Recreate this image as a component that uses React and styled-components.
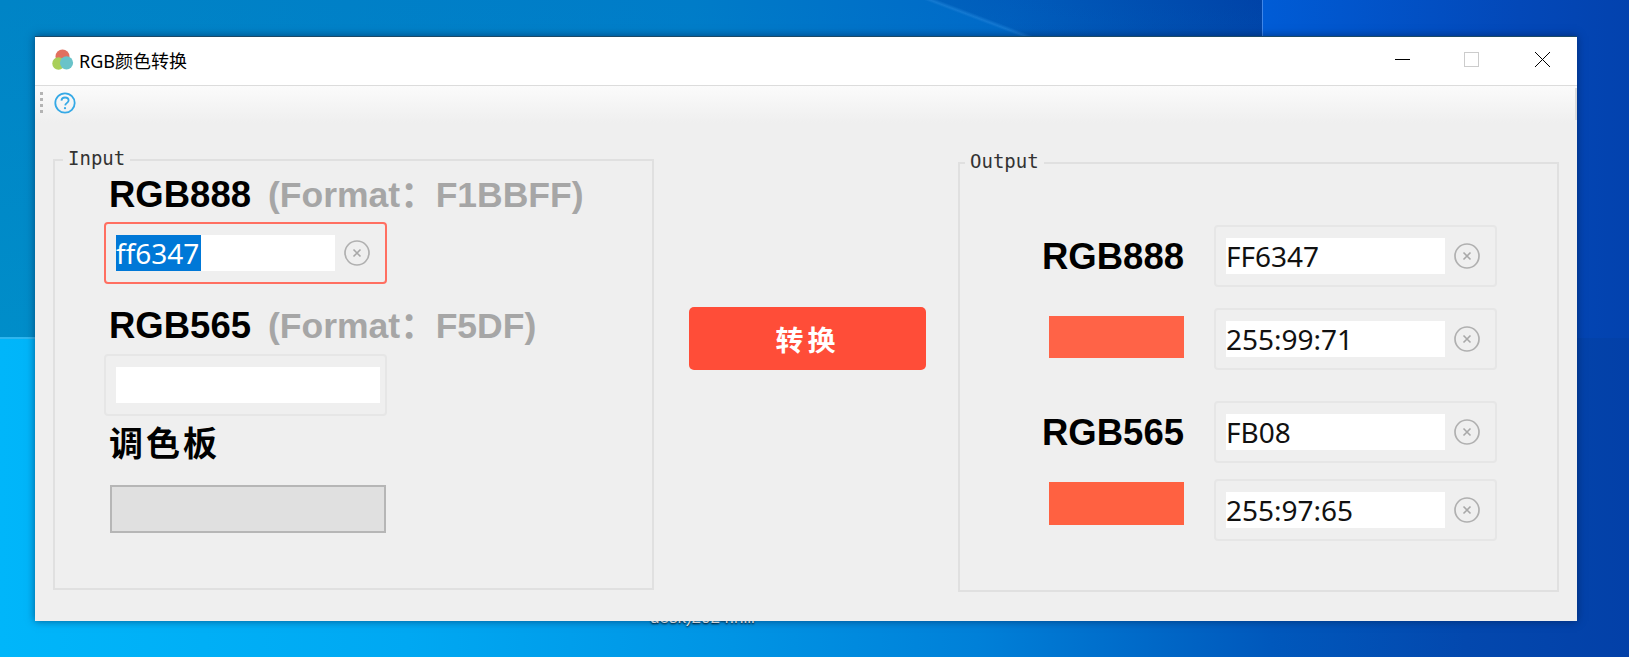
import React from "react";
import styled, { createGlobalStyle } from "styled-components";

const GlobalStyle = createGlobalStyle`
    html, body {
        margin: 0;
        padding: 0;
        overflow: hidden;
    }
`;

// wallpaper: three panes of the win10 light beam, most of it is behind the window
const Desktop = styled.div`
    position: relative;
    width: 1629px;
    height: 657px;
    box-sizing: border-box;
    padding: 36px 52px 36px 35px;
    overflow: hidden;
    background-color: #0345b0;
    background-repeat: no-repeat;
    background-image:
        linear-gradient(#2fb6ee, #2fb6ee),
        linear-gradient(#3f86e8, #3f86e8),
        linear-gradient(20.7deg, rgba(0, 0, 0, 0) 84.3%, rgba(110, 180, 250, 0.18) 84.6%, rgba(0, 20, 110, 0.12) 85%, rgba(0, 20, 110, 0.2) 100%),
        linear-gradient(180deg, rgba(0, 160, 200, 0) 0, rgba(0, 170, 210, 0.25) 100%),
        linear-gradient(90deg, #0084c6 0, #007cc8 55%, #0068c8 80%, #004fb6 100%),
        linear-gradient(90deg, #005cd6 0, #0348b8 70%, #0342ae 100%),
        linear-gradient(90deg, #00b6fa 0, #00a8f2 25%, #0094e4 45%, #0080d8 60%, #0058bc 78%, #0348ae 90%, #0340a8 100%);
    background-size:
        35px 2px,
        1px 36px,
        1262px 338px,
        1262px 338px,
        1262px 338px,
        367px 338px,
        1629px 657px;
    background-position:
        0 337px,
        1262px 0,
        0 0,
        0 0,
        0 0,
        1262px 0,
        0 0;
`;

const DesktopLabel = styled.div`
    position: absolute;
    left: 650px;
    top: 608px;
    font: 17px "Liberation Sans", sans-serif;
    color: #fff;
    text-shadow: 0 1px 2px #000;
`;

const Window = styled.div`
    position: relative;
    z-index: 1;
    display: flex;
    flex-direction: column;
    width: 1542px;
    height: 585px;
    background: #efefef;
    border-top: 1px solid #1b4a68;
    box-sizing: border-box;
    box-shadow: 0 0 8px rgba(0, 20, 60, 0.55);
    font-family: "Liberation Sans", "Noto Sans CJK SC", sans-serif;
`;

const TitleBar = styled.div`
    display: flex;
    align-items: center;
    box-sizing: border-box;
    height: 49px;
    padding: 0 0 3px 17px;
    background: #fff;
    border-bottom: 1px solid #dcdcdc;
`;

const Title = styled.div`
    margin-left: 5px;
    font: 18px "Noto Sans", "Noto Sans CJK SC", sans-serif;
    color: #000;
`;

const WindowButtons = styled.div`
    display: flex;
    margin-left: auto;
    padding-right: 27px;
    gap: 54px;
    svg:last-child {
        margin-left: 2px;
    }
`;

const Toolbar = styled.div`
    position: relative;
    display: flex;
    align-items: flex-start;
    box-sizing: border-box;
    height: 41px;
    padding: 6px 0 0 5px;
    background: linear-gradient(180deg, #fbfbfb 0, #efefef 90%);
`;

const Grip = styled.div`
    display: flex;
    flex-direction: column;
    gap: 3px;
    span {
        width: 3px;
        height: 3px;
        background: #b4b4b4;
    }
`;

const HelpWrap = styled.div`
    display: flex;
    margin-left: 11px;
`;

const ToolEdge = styled.div`
    position: absolute;
    top: 2px;
    right: 0;
    width: 2px;
    height: 32px;
    background: #dcdcdc;
`;

const Body = styled.div`
    display: flex;
    align-items: flex-start;
    flex: 1;
    padding-left: 18px;
`;

const Group = styled.div`
    position: relative;
    box-sizing: border-box;
    width: 601px;
    height: ${(p) => p.$height}px;
    margin-top: ${(p) => p.$top}px;
    border: 2px solid #e0e0e0;
`;

const Legend = styled.div`
    position: absolute;
    top: -14px;
    left: ${(p) => p.$left}px;
    padding: 0 5px;
    background: #efefef;
    font: 19px/22px "DejaVu Sans Mono", monospace;
    color: #333;
`;

const InputColumn = styled.div`
    padding: 14px 0 0 49px;
`;

const Label = styled.div`
    display: flex;
    height: 40px;
    align-items: baseline;
    line-height: 40px;
    margin: ${(p) => p.$top || 0}px 0 ${(p) => p.$bottom || 7}px 5px;
    font-size: ${(p) => p.$size || 36.5}px;
    font-weight: 700;
    color: #000;
    white-space: nowrap;
    letter-spacing: ${(p) => p.$spacing || 0}px;
`;

const Hint = styled.span`
    margin-left: 17px;
    font-size: 35.5px;
    color: #a6a6a6;
`;

const Field = styled.div`
    display: flex;
    align-items: center;
    box-sizing: border-box;
    width: 283px;
    height: 62px;
    padding: 0 5px 0 10px;
    background: #efefef;
    border: 2px solid ${(p) => (p.$focus ? "#ff6f61" : "#e6e6e6")};
    border-radius: 4px;
`;

const Value = styled.div`
    flex: 1;
    height: 36px;
    background: #fff;
    font: 28px/36px "Noto Sans", sans-serif;
    color: #111;
    white-space: nowrap;
`;

const Selected = styled.span`
    display: inline-block;
    height: 36px;
    padding-right: 2px;
    background: #0078d7;
    color: #fff;
`;

const ClearWrap = styled.div`
    display: flex;
    margin: 0 10px 0 9px;
`;

const Palette = styled.div`
    box-sizing: border-box;
    width: 276px;
    height: 48px;
    margin: 21px 0 0 6px;
    background: #e0e0e0;
    border: 2px solid #b6b6b6;
`;

const Middle = styled.div`
    display: flex;
    width: 304px;
    padding: 180px 0 0 35px;
    box-sizing: border-box;
`;

const ConvertButton = styled.button`
    width: 237px;
    height: 63px;
    border: 0;
    border-radius: 5px;
    background: #ff4d38;
    color: #fff;
    font: 700 28px "Noto Sans CJK SC", sans-serif;
    letter-spacing: 4px;
`;

const OutputColumn = styled.div`
    padding-top: 61px;
`;

const Row = styled.div`
    display: flex;
    align-items: center;
    margin-top: ${(p) => p.$top || 0}px;
`;

const RowLead = styled.div`
    display: flex;
    justify-content: flex-end;
    box-sizing: border-box;
    width: 254px;
    padding: 2px 30px 0 0;
    font-size: 36.5px;
    font-weight: 700;
    color: #000;
`;

const Swatch = styled.div`
    width: 135px;
    height: ${(p) => p.$height}px;
    margin-bottom: ${(p) => p.$lift || 0}px;
    background: ${(p) => p.$color};
`;

const AppIcon = () => (
    <svg width="22" height="22" viewBox="0 0 22 22">
        <circle cx="10.5" cy="7.5" r="7" fill="#e2705f" />
        <circle cx="6.5" cy="14.5" r="6.2" fill="#a9cf5a" />
        <circle cx="14.5" cy="13.8" r="6.6" fill="#69c3c9" />
    </svg>
);

const MinimizeIcon = () => (
    <svg width="15" height="15" viewBox="0 0 15 15">
        <path d="M0 7.5H15" stroke="#000" strokeWidth="1" fill="none" />
    </svg>
);

const MaximizeIcon = () => (
    <svg width="15" height="15" viewBox="0 0 15 15">
        <rect x="0.5" y="0.5" width="14" height="14" stroke="#ccc" strokeWidth="1" fill="none" />
    </svg>
);

const CloseIcon = () => (
    <svg width="15" height="15" viewBox="0 0 15 15">
        <path d="M0 0L15 15M15 0L0 15" stroke="#000" strokeWidth="1" fill="none" />
    </svg>
);

const HelpIcon = () => (
    <svg width="22" height="22" viewBox="0 0 22 22">
        <circle cx="11" cy="11" r="9.7" stroke="#35a9e6" strokeWidth="1.8" fill="none" />
        <path d="M7.4 8.6C7.6 6.6 9.1 5.5 11 5.5C13.1 5.5 14.6 6.9 14.6 8.6C14.6 10.7 11.4 11 11.2 13.4" stroke="#35a9e6" strokeWidth="1.8" fill="none" />
        <circle cx="11" cy="16.2" r="1.1" fill="#35a9e6" />
    </svg>
);

const ClearIcon = () => (
    <svg width="26" height="26" viewBox="0 0 26 26">
        <circle cx="13" cy="13" r="12" stroke="#b0b0b0" strokeWidth="1.7" fill="none" />
        <path d="M9.5 9.5L16.5 16.5M16.5 9.5L9.5 16.5" stroke="#a8a8a8" strokeWidth="1.6" fill="none" />
    </svg>
);

const OutputField = ({ value }) => (
    <Field>
        <Value>{value}</Value>
        <ClearWrap>
            <ClearIcon />
        </ClearWrap>
    </Field>
);

const App = () => (
    <Desktop>
        <GlobalStyle />
        <DesktopLabel>desk)2024.nlli</DesktopLabel>
        <Window>
            <TitleBar>
                <AppIcon />
                <Title>RGB颜色转换</Title>
                <WindowButtons>
                    <MinimizeIcon />
                    <MaximizeIcon />
                    <CloseIcon />
                </WindowButtons>
            </TitleBar>
            <Toolbar>
                <Grip>
                    <span />
                    <span />
                    <span />
                    <span />
                </Grip>
                <HelpWrap>
                    <HelpIcon />
                </HelpWrap>
                <ToolEdge />
            </Toolbar>
            <Body>
                <Group $height={431} $top={32}>
                    <Legend $left={8}>Input</Legend>
                    <InputColumn>
                        <Label>
                            RGB888<Hint>(Format：F1BBFF)</Hint>
                        </Label>
                        <Field $focus>
                            <Value>
                                <Selected>ff6347</Selected>
                            </Value>
                            <ClearWrap>
                                <ClearIcon />
                            </ClearWrap>
                        </Field>
                        <Label $top={22} $bottom={8}>
                            RGB565<Hint>(Format：F5DF)</Hint>
                        </Label>
                        <Field>
                            <Value />
                        </Field>
                        <Label $top={8} $bottom={6} $size={34} $spacing={3}>
                            调色板
                        </Label>
                        <Palette />
                    </InputColumn>
                </Group>
                <Middle>
                    <ConvertButton>转换</ConvertButton>
                </Middle>
                <Group $height={430} $top={35}>
                    <Legend $left={5}>Output</Legend>
                    <OutputColumn>
                        <Row>
                            <RowLead>RGB888</RowLead>
                            <OutputField value="FF6347" />
                        </Row>
                        <Row $top={21}>
                            <RowLead>
                                <Swatch $height={42} $lift={6} $color="#ff6347" />
                            </RowLead>
                            <OutputField value="255:99:71" />
                        </Row>
                        <Row $top={31}>
                            <RowLead>RGB565</RowLead>
                            <OutputField value="FB08" />
                        </Row>
                        <Row $top={16}>
                            <RowLead>
                                <Swatch $height={43} $lift={15} $color="#ff6141" />
                            </RowLead>
                            <OutputField value="255:97:65" />
                        </Row>
                    </OutputColumn>
                </Group>
            </Body>
        </Window>
    </Desktop>
);

export default App;
